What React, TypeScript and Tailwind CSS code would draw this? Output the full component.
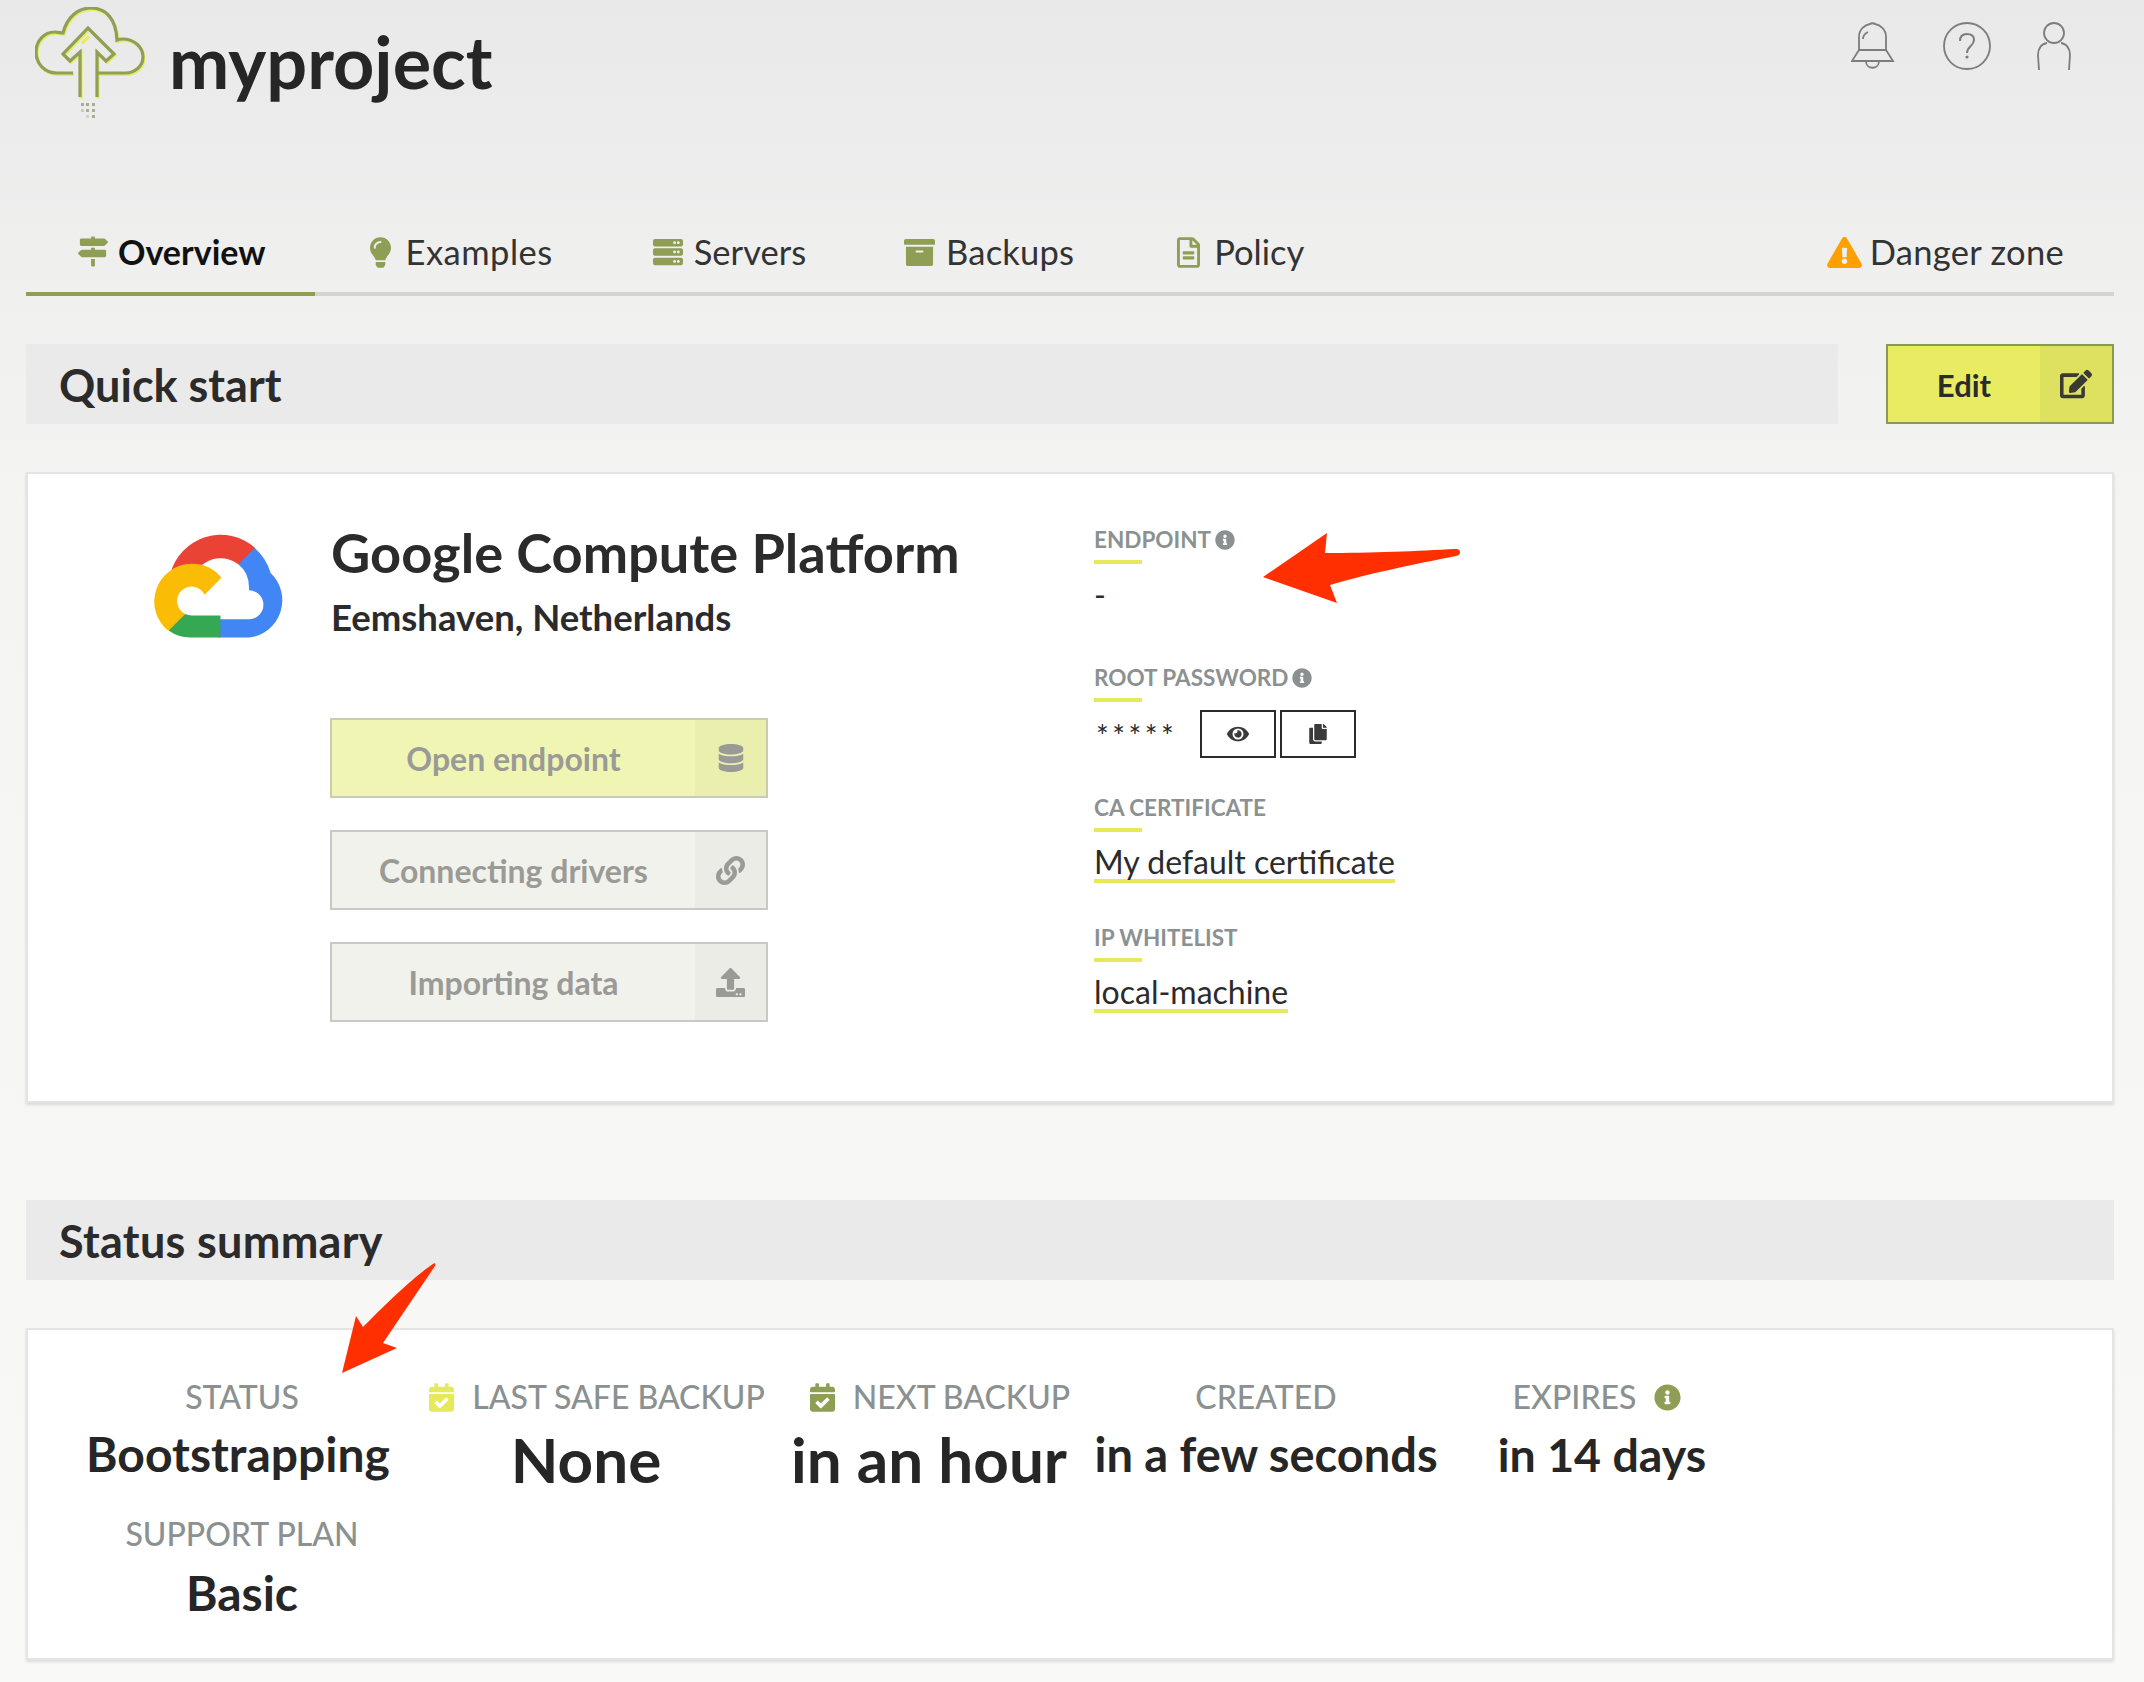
import React from 'react';
import {
  FaArchive, FaCalendarCheck, FaCopy, FaDatabase, FaEdit, FaExclamationTriangle, FaEye,
  FaInfoCircle, FaLightbulb, FaLink, FaMapSigns, FaRegFileAlt, FaServer, FaUpload,
} from 'react-icons/fa';

const LogoMark = () => (
  <svg viewBox="0 0 110 112" className="w-[110px] h-[112px] shrink-0" fill="none">
    <g strokeWidth="3.2" stroke="#e6ec5c" transform="translate(1 1.4)">
      <path d="M38 66H22C9 66 1 56 1 45c0-11 8-20 19-20 3 0 6 1 8 1C32 10 43 1 56 1c15 0 25 11 26 32 2-1 4-1 6-1 11 0 20 8 20 18 0 9-8 16-18 16H63" />
      <path d="M46 35 53 28 M45 90V45L35 54 28 47 53 21 79 47 71 54 62 45V90" />
    </g>
    <g strokeWidth="3.2" stroke="#8f9e58">
      <path d="M38 66H22C9 66 1 56 1 45c0-11 8-20 19-20 3 0 6 1 8 1C32 10 43 1 56 1c15 0 25 11 26 32 2-1 4-1 6-1 11 0 20 8 20 18 0 9-8 16-18 16H63" />
      <path d="M45 90V45L35 54 28 47 53 21 79 47 71 54 62 45V90" />
    </g>
    <g fill="#a9ad98">
      <rect x="46" y="96" width="3" height="3" /><rect x="51" y="96" width="3" height="3" /><rect x="57" y="96" width="3" height="3" />
      <rect x="46" y="102" width="3" height="3" opacity=".5" /><rect x="51" y="102" width="3" height="3" /><rect x="57" y="102" width="3" height="3" />
      <rect x="51" y="108" width="3" height="3" opacity=".4" /><rect x="57" y="108" width="3" height="3" />
    </g>
  </svg>
);

const BellIcon = () => (
  <svg viewBox="0 0 44 48" className="w-[44px] h-[48px]" fill="none" stroke="#7d7d7d" strokeWidth="1.8">
    <path d="M8 28V15C8 7 14 3 19 2c1-1 4-1 5 0 5 1 11 5 11 13v13" />
    <path d="M8 28h27l7 11H1z" />
    <path d="M15 39c0 9 13 9 13 0" />
    <path d="M12 17c0-4 3-6 5-7" />
  </svg>
);

const HelpIcon = () => (
  <svg viewBox="0 0 48 48" className="w-[48px] h-[48px]" fill="none" stroke="#7d7d7d" strokeWidth="1.8">
    <circle cx="24" cy="24" r="23" />
    <path d="M17 19c0-5 3-7 7-7s7 2 7 6c0 6-7 6-7 13" strokeWidth="2" />
    <circle cx="24" cy="35" r="1.6" fill="#7d7d7d" stroke="none" />
  </svg>
);

const UserIcon = () => (
  <svg viewBox="0 0 34 48" className="w-[34px] h-[48px]" fill="none" stroke="#7d7d7d" strokeWidth="1.8">
    <circle cx="17" cy="11" r="10" />
    <path d="M10 21C4 22 1 27 1 33l1 15 M24 21c6 1 9 6 9 12l-1 15" />
  </svg>
);

const GoogleCloud = () => (
  <svg viewBox="-2.6 -0.6 28 22.4" className="w-[135px] h-[108px] shrink-0">
    <path d="M15.1 6.1h1l2.4-2.4.1-1A10.8 10.8 0 0 0 1 8c.3-.1.6-.1.9-.1l4.8-.8s.2-.4.4-.4a6 6 0 0 1 8-.6z" fill="#EA4335" />
    <path d="M21.8 7.9a10.9 10.9 0 0 0-3.3-5.2l-3.4 3.4a6 6 0 0 1 2.2 4.8v.6a3 3 0 1 1 0 6h-6l-.6.6V21.200l.6.1h6A7.8 7.8 0 0 0 21.800 7.900z" fill="#4285F4" />
    <path d="M5.400 21.300h6V16.700h-6c-.4 0-.9-.1-1.200-.3l-.9.3-2.400 2.400-.2.800a7.800 7.800 0 0 0 4.700 1.400z" fill="#34A853" />
    <path d="M5.400 6A7.800 7.800 0 0 0 .6 19.900l3.500-3.500a3 3 0 1 1 4-4l3.500-3.500A7.800 7.800 0 0 0 5.400 6z" fill="#FBBC05" />
  </svg>
);

const tabs = [
  { name: 'Examples', cls: 'pl-[55px] pr-[50px] gap-[14px] tracking-[0.5px]', icon: <FaLightbulb className="w-[21px] h-[31px]" /> },
  { name: 'Servers', cls: 'px-[50px] gap-[11px]', icon: <FaServer className="w-[30px] h-[30px]" /> },
  { name: 'Backups', cls: 'pl-[48px] pr-[50px] gap-[11px] tracking-[0.2px]', icon: <FaArchive className="w-[31px] h-[31px]" /> },
  { name: 'Policy', cls: 'pl-[53px] pr-[50px] gap-[14px]', icon: <FaRegFileAlt className="w-[23px] h-[31px]" /> },
];

const SectionTitle = ({ children }: { children: React.ReactNode }) => (
  <div className="flex-1 h-[80px] bg-[#eaeaea] flex items-center pl-[33px] pt-[4px] text-[45px] font-bold text-[#2b2b2b]">
    {children}
  </div>
);

const ActionButton = ({ label, icon, tone }: { label: string; icon: React.ReactNode; tone: 'lime' | 'gray' }) => (
  <div className={`flex h-[80px] w-[438px] border-2 text-[#9a9a96] ${tone === 'lime' ? 'bg-[#f1f5b4] border-[#c9cdac]' : 'bg-[#f2f2ec] border-[#c8c8c5]'}`}>
    <div className="flex-1 flex items-center justify-center pt-[2px] text-[32px] font-bold">{label}</div>
    <div className={`w-[71px] flex items-center justify-center ${tone === 'lime' ? 'bg-[#ebefae]' : 'bg-[#ecece7]'}`}>{icon}</div>
  </div>
);

const FieldLabel = ({ children, info }: { children: string; info?: boolean }) => (
  <div>
    <div className="h-[24px] flex items-center gap-[4px] text-[22.5px] font-bold text-[#8b9191]">
      {children}
      {info && <FaInfoCircle className="w-[20px] h-[20px]" />}
    </div>
    <div className="mt-[8px] w-[48px] h-[4px] bg-[#e6ea5a]" />
  </div>
);

const StatItem = ({ label, value, valueClass, labelClass, icon, after }: {
  label: string; value: string; valueClass: string; labelClass?: string; icon?: React.ReactNode; after?: React.ReactNode;
}) => (
  <div className="flex flex-col items-center whitespace-nowrap">
    <div className={`h-[36px] flex items-center gap-[18px] text-[32px] font-medium text-[#8b9191] ${labelClass ?? ''}`}>
      {icon}
      {label}
      {after}
    </div>
    <div className={`font-bold text-[#262626] ${valueClass}`}>{value}</div>
  </div>
);

export default function App() {
  return (
    <div
      className="relative w-full h-[1682px] overflow-hidden bg-gradient-to-b from-[#e9e9e9] via-[#f4f5f3] via-30% to-[#f9f9f8] pl-[26px] pr-[30px] text-[#2b2b2b]"
      style={{ fontFamily: 'Lato, "Liberation Sans", sans-serif' }}
    >
      {/* header */}
      <div className="h-[220px] flex justify-between items-start">
        <div className="flex items-start pl-[9px] pt-[7px]">
          <LogoMark />
          <div className="ml-[24px] mt-[14px] text-[72px] leading-[80px] font-bold text-[#262626]">myproject</div>
        </div>
        <div className="flex items-start pt-[22px] pr-[43px]">
          <BellIcon />
          <div className="ml-[48px]"><HelpIcon /></div>
          <div className="ml-[46px]"><UserIcon /></div>
        </div>
      </div>

      {/* tabs */}
      <div className="flex h-[76px] border-b-4 border-[#d3d3d3] text-[34.5px] text-[#333333]">
        <div className="h-[76px] flex items-center gap-[10px] pl-[52px] pr-[50px] pb-[10px] border-b-4 border-[#8f9e55] text-[34px] font-bold text-[#111111]">
          <FaMapSigns className="w-[30px] h-[31px] text-[#8f9e55]" />
          Overview
        </div>
        {tabs.map((tab) => (
          <div key={tab.name} className={`h-[72px] flex items-center pb-[8px] ${tab.cls}`}>
            <span className="text-[#8f9e55] flex">{tab.icon}</span>
            {tab.name}
          </div>
        ))}
        <div className="ml-auto h-[72px] flex items-center gap-[8px] px-[50px] pb-[8px] tracking-[0.3px]">
          <FaExclamationTriangle className="w-[35px] h-[31px] text-[#ffa000]" />
          Danger zone
        </div>
      </div>

      {/* quick start */}
      <div className="mt-[48px] flex gap-[48px]">
        <SectionTitle>Quick start</SectionTitle>
        <div className="w-[228px] h-[80px] flex border-2 border-[#8a9a50] bg-[#e9ec62]">
          <div className="flex-1 flex items-center justify-center pt-[2px] text-[31px] font-bold">Edit</div>
          <div className="w-[72px] flex items-center justify-center bg-[#dee05f]">
            <FaEdit className="w-[32px] h-[30px] text-[#3a3a34]" />
          </div>
        </div>
      </div>

      <div className="mt-[48px] h-[631px] flex bg-white border-2 border-[#e4e4e4] shadow-[0_2px_3px_rgba(0,0,0,0.12)]">
        <div className="pl-[125px] pt-[58px]">
          <GoogleCloud />
        </div>
        <div className="ml-[42px] w-[764px] pt-[45px]">
          <div className="pl-[1px] text-[54.2px] leading-[68px] font-bold text-[#2b2b2b]">Google Compute Platform</div>
          <div className="pl-[1px] mt-[8px] text-[36.5px] leading-[44px] font-bold text-[#2b2b2b]">Eemshaven, Netherlands</div>
          <div className="mt-[79px] flex flex-col gap-[32px]">
            <ActionButton tone="lime" label="Open endpoint" icon={<FaDatabase className="w-[26px] h-[28px]" />} />
            <ActionButton tone="gray" label="Connecting drivers" icon={<FaLink className="w-[29px] h-[29px]" />} />
            <ActionButton tone="gray" label="Importing data" icon={<FaUpload className="w-[29px] h-[29px]" />} />
          </div>
        </div>
        <div className="pt-[54px]">
          <FieldLabel info>ENDPOINT</FieldLabel>
          <div className="mt-[13px] mb-[53px] text-[32px] leading-[36px]">-</div>
          <FieldLabel info>ROOT PASSWORD</FieldLabel>
          <div className="mt-[7px] mb-[38px] flex items-center gap-[4px]">
            <span className="w-[102px] pl-[2px] pt-[4px] text-[30px] tracking-[3.5px]">*****</span>
            <span className="w-[76px] h-[48px] border-2 border-[#2b2b2b] flex items-center justify-center"><FaEye className="w-[22px] h-[22px] text-[#3a3a3a]" /></span>
            <span className="w-[76px] h-[48px] border-2 border-[#2b2b2b] flex items-center justify-center"><FaCopy className="w-[20px] h-[20px] text-[#3a3a3a]" /></span>
          </div>
          <FieldLabel>CA CERTIFICATE</FieldLabel>
          <div className="mt-[13px] mb-[43px] w-fit border-b-4 border-[#e6ea5a] text-[32px] leading-[34px] text-[#2b2b2b]">My default certificate</div>
          <FieldLabel>IP WHITELIST</FieldLabel>
          <div className="mt-[13px] w-fit border-b-4 border-[#e6ea5a] text-[32px] leading-[34px] text-[#2b2b2b]">local-machine</div>
        </div>
      </div>

      {/* status summary */}
      <div className="mt-[97px] flex">
        <SectionTitle><span className="tracking-[0.3px]">Status summary</span></SectionTitle>
      </div>
      <div className="mt-[48px] h-[332px] flex items-start bg-white border-2 border-[#e4e4e4] shadow-[0_2px_3px_rgba(0,0,0,0.12)] pt-[49px] pl-[59px]">
        <div className="w-[310px] flex flex-col items-center gap-[34px]">
          <StatItem label="STATUS" value="Bootstrapping" valueClass="mt-[11px] mr-[8px] text-[48px] leading-[56px]" />
          <StatItem label="SUPPORT PLAN" value="Basic" valueClass="mt-[13px] text-[48px] leading-[56px]" />
        </div>
        <div className="ml-[30px] w-[340px]">
          <StatItem label="LAST SAFE BACKUP" value="None" valueClass="mt-[8px] mr-[22px] text-[62px] leading-[72px]" icon={<FaCalendarCheck className="w-[25px] h-[29px] text-[#e6ea5a]" />} />
        </div>
        <div className="ml-[35px] w-[276px]">
          <StatItem label="NEXT BACKUP" value="in an hour" valueClass="mt-[8px] mr-[22px] text-[62px] leading-[72px]" icon={<FaCalendarCheck className="w-[25px] h-[29px] text-[#8f9e55]" />} />
        </div>
        <div className="ml-[18px] w-[340px]">
          <StatItem label="CREATED" value="in a few seconds" valueClass="mt-[11px] text-[47px] leading-[56px]" />
        </div>
        <div className="ml-[61px] w-[210px]">
          <StatItem label="EXPIRES" value="in 14 days" labelClass="mr-[10px]" valueClass="mt-[11px] text-[46.500px] leading-[56px]" after={<FaInfoCircle className="w-[27px] h-[27px] text-[#8f9e55]" />} />
        </div>
      </div>

      {/* red annotation arrows */}
      <svg className="absolute left-[1255px] top-[525px] w-[215px] h-[90px]" viewBox="1255 525 215 90">
        <path d="M1263 577 1327 533 1325 553C1370 553 1420 551 1455 549c6-1 7 6 1 7-40 8-90 18-126 29l7 18z" fill="#ff2f00" />
      </svg>
      <svg className="absolute left-[335px] top-[1258px] w-[105px] h-[120px]" viewBox="335 1258 105 120">
        <path d="M433 1264c2-2 3 0 2 2l-52 77 14 5-55 25 14-57 7 11c20-20 50-50 70-63z" fill="#ff2f00" />
      </svg>
    </div>
  );
}
